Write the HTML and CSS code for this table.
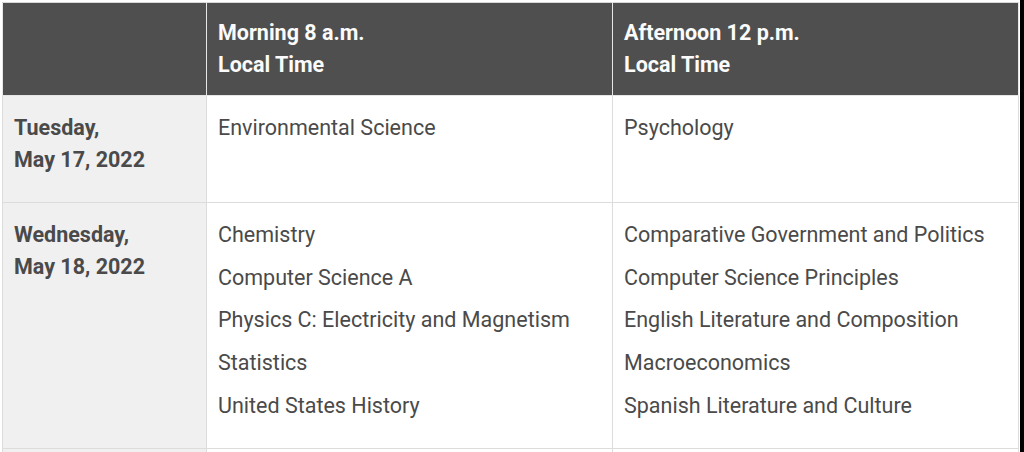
FILE: index.html
```html
<!DOCTYPE html>
<html>
<head>
<meta charset="utf-8">
<link rel="stylesheet" href="styles.css">
</head>
<body>
<div class="page">
  <table class="schedule">
    <colgroup>
      <col class="c-day">
      <col class="c-slot">
      <col class="c-slot">
    </colgroup>
    <thead>
      <tr>
        <th></th>
        <th>Morning 8 a.m.<br>Local Time</th>
        <th>Afternoon 12 p.m.<br>Local Time</th>
      </tr>
    </thead>
    <tbody>
      <tr>
        <td class="day"><p>Tuesday,<br>May 17, 2022</p></td>
        <td><p>Environmental Science</p></td>
        <td><p>Psychology</p></td>
      </tr>
      <tr>
        <td class="day"><p>Wednesday,<br>May 18, 2022</p></td>
        <td>
          <p>Chemistry</p>
          <p>Computer Science A</p>
          <p>Physics C: Electricity and Magnetism</p>
          <p>Statistics</p>
          <p>United States History</p>
        </td>
        <td>
          <p>Comparative Government and Politics</p>
          <p>Computer Science Principles</p>
          <p>English Literature and Composition</p>
          <p>Macroeconomics</p>
          <p>Spanish Literature and Culture</p>
        </td>
      </tr>
      <tr class="next">
        <td class="day"></td>
        <td></td>
        <td></td>
      </tr>
    </tbody>
  </table>
  <div class="edge"></div>
</div>
</body>
</html>
```

FILE: styles.css
```css
html, body {
  margin: 0;
  padding: 0;
  height: 100%;
  overflow: hidden;
  background: #ffffff;
}

.page {
  display: flex;
  height: 452px;
  overflow: hidden;
}

.schedule {
  width: 1017px;
  flex: none;
  margin: 2px 0 0 2px;
  border-collapse: collapse;
  table-layout: fixed;
  font-family: Roboto, "Liberation Sans", sans-serif;
  font-size: 21.5px;
  line-height: 32px;
  color: #4a4a4a;
  align-self: flex-start;
}

.c-day { width: 204px; }
.c-slot { width: 406px; }

.schedule th,
.schedule td {
  text-align: left;
  vertical-align: top;
  padding: 16px 12px 15px 11px;
  border: 1px solid #dcdcdc;
}

.schedule th {
  padding-top: 14px;
  padding-bottom: 14px;
  background: #4f4f4f;
  color: #fbfbfb;
  font-weight: 700;
  border-color: #e6e6e6;
  border-top-color: #d8d8d8;
}

.schedule td p {
  margin: 0 0 10.75px;
}

.schedule td.day {
  background: #f0f0f1;
  font-weight: 700;
}

.schedule tr.next td {
  height: 40px;
}

.edge {
  flex: 1;
  margin-left: 1px;
  background: #000000;
}
```
